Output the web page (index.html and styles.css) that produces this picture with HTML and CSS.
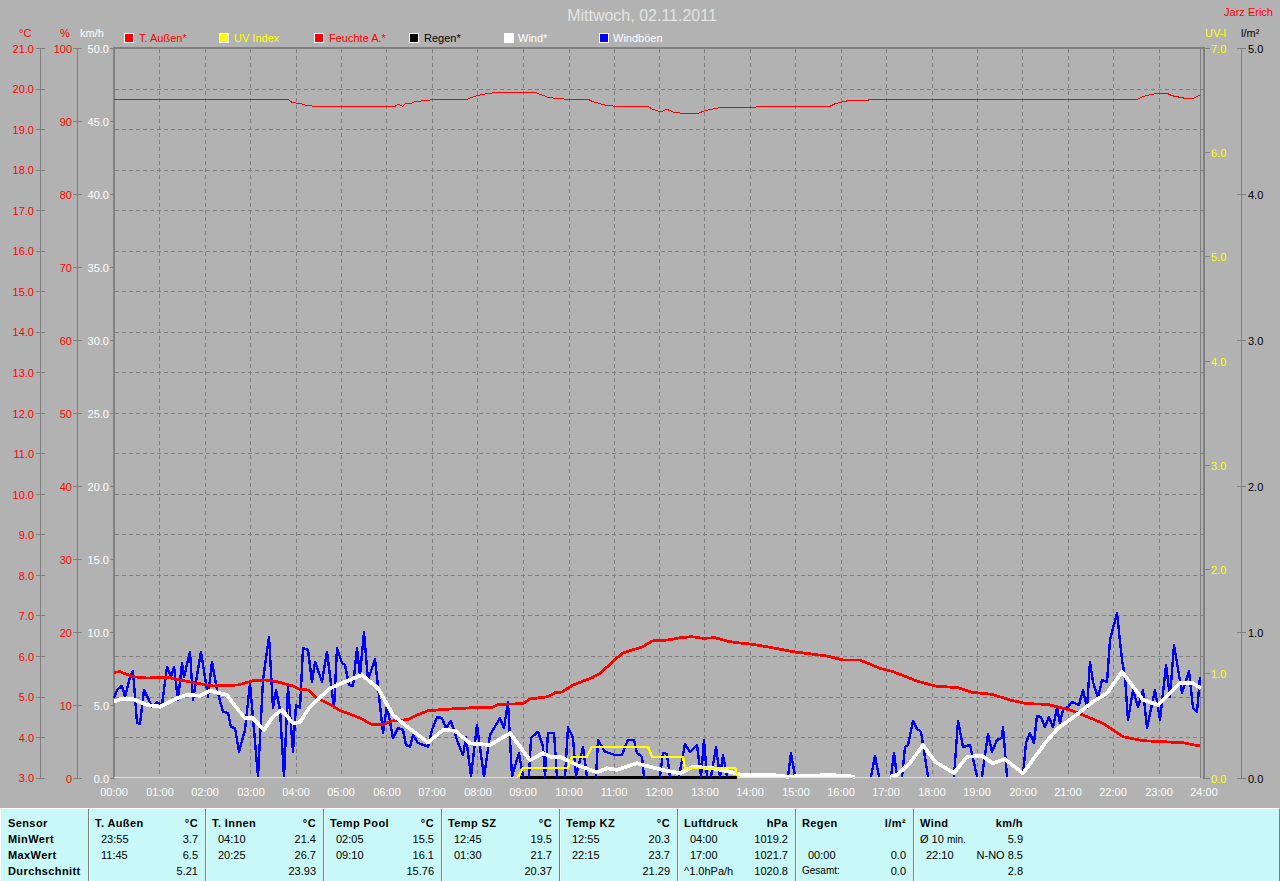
FILE: index.html
```html
<!DOCTYPE html>
<html lang="de">
<head>
    <meta charset="UTF-8">
    <title>Wetter Mittwoch, 02.11.2011</title>
    <link rel="stylesheet" href="styles.css">
</head>
<body>
    <svg class="chart" width="1280" height="808" viewBox="0 0 1280 808">
        <text class="title" x="642" y="21">Mittwoch, 02.11.2011</text>
        <text class="red end" x="1273" y="16">Jarz Erich</text>

        <!-- legende -->
        <g class="legend">
            <rect x="124.5" y="33.5" width="9" height="9" fill="#f00"/>
            <rect x="219.5" y="33.5" width="9" height="9" fill="#ff0"/>
            <rect x="314.5" y="33.5" width="9" height="9" fill="#f00"/>
            <rect x="409.5" y="33.5" width="9" height="9" fill="#000"/>
            <rect x="504.5" y="33.5" width="9" height="9" fill="#fff"/>
            <rect x="599.5" y="33.5" width="9" height="9" fill="#00f"/>
        </g>
        <text class="red" x="139" y="42">T. Außen*</text>
        <text class="yellow" x="234" y="42">UV Index</text>
        <text class="red" x="329" y="42">Feuchte A.*</text>
        <text class="black" x="424" y="42">Regen*</text>
        <text class="white" x="518" y="42">Wind*</text>
        <text class="white" x="613" y="42">Windböen</text>

        <text class="red" x="19" y="37">°C</text>
        <text class="red" x="60" y="37">%</text>
        <text class="white" x="80" y="37">km/h</text>
        <text class="yellow" x="1205" y="37">UV-I</text>
        <text class="black" x="1241" y="37">l/m²</text>

        <!-- raster -->
        <path class="grid" d="M115 89H1203M115 129.5H1203M115 170H1203M115 210.5H1203M115 251H1203M115 291.5H1203M115 332H1203M115 372.5H1203M115 413H1203M115 453.5H1203M115 494H1203M115 534.5H1203M115 575H1203M115 615.5H1203M115 656.5H1203M115 697H1203M115 737.5H1203"/>
        <path class="grid" d="M159.5 49V778M205.5 49V778M250.5 49V778M296.5 49V778M341.5 49V778M386.5 49V778M432.5 49V778M477.5 49V778M523.5 49V778M569.5 49V778M614.5 49V778M659.5 49V778M704.5 49V778M750.5 49V778M795.5 49V778M841.5 49V778M886.5 49V778M932.5 49V778M977.5 49V778M1022.5 49V778M1068.5 49V778M1113.5 49V778M1159.5 49V778"/>

        <!-- achsen -->
        <path class="axis" d="M40.5 48V778M36 48.5H45M36 89H45M36 129.5H45M36 170H45M36 210.5H45M36 251H45M36 291.5H45M36 332H45M36 372.5H45M36 413H45M36 453.5H45M36 494H45M36 534.5H45M36 575H45M36 615.5H45M36 656.5H45M36 697H45M36 737.5H45M36 778.5H45"/>
        <path class="axis" d="M77.5 48V778M73 48.5H82M73 121.5H82M73 194.5H82M73 267.5H82M73 340.5H82M73 413.5H82M73 486.5H82M73 559.5H82M73 632.5H82M73 705.5H82M73 778.5H82"/>
        <path class="axis" d="M110 48.5H114M110 121.5H114M110 194.5H114M110 267.5H114M110 340.5H114M110 413.5H114M110 486.5H114M110 559.5H114M110 632.5H114M110 705.5H114M110 778.5H114"/>
        <path class="axis" d="M1200.5 48V778M1204 48.5H1210M1204 152.5H1210M1204 256.5H1210M1204 361.5H1210M1204 465.5H1210M1204 569.5H1210M1204 673.5H1210M1204 778.5H1210"/>
        <path class="axis" d="M1241.5 48V778M1237 48.5H1246M1237 194.5H1246M1237 340.5H1246M1237 486.5H1246M1237 632.5H1246M1237 778.5H1246"/>
        <path class="frame" d="M114 779V48H1204V779"/>

        <g class="red end">
            <text x="34" y="53">21.0</text>
            <text x="34" y="93">20.0</text>
            <text x="34" y="134">19.0</text>
            <text x="34" y="174">18.0</text>
            <text x="34" y="215">17.0</text>
            <text x="34" y="255">16.0</text>
            <text x="34" y="296">15.0</text>
            <text x="34" y="336">14.0</text>
            <text x="34" y="377">13.0</text>
            <text x="34" y="418">12.0</text>
            <text x="34" y="458">11.0</text>
            <text x="34" y="499">10.0</text>
            <text x="34" y="539">9.0</text>
            <text x="34" y="580">8.0</text>
            <text x="34" y="620">7.0</text>
            <text x="34" y="661">6.0</text>
            <text x="34" y="701">5.0</text>
            <text x="34" y="742">4.0</text>
            <text x="34" y="782">3.0</text>
        </g>
        <g class="red end">
            <text x="72" y="53">100</text>
            <text x="72" y="126">90</text>
            <text x="72" y="199">80</text>
            <text x="72" y="272">70</text>
            <text x="72" y="345">60</text>
            <text x="72" y="418">50</text>
            <text x="72" y="491">40</text>
            <text x="72" y="564">30</text>
            <text x="72" y="637">20</text>
            <text x="72" y="710">10</text>
            <text x="72" y="783">0</text>
        </g>
        <g class="white end">
            <text x="109" y="53">50.0</text>
            <text x="109" y="126">45.0</text>
            <text x="109" y="199">40.0</text>
            <text x="109" y="272">35.0</text>
            <text x="109" y="345">30.0</text>
            <text x="109" y="418">25.0</text>
            <text x="109" y="491">20.0</text>
            <text x="109" y="564">15.0</text>
            <text x="109" y="637">10.0</text>
            <text x="109" y="710">5.0</text>
            <text x="109" y="783">0.0</text>
        </g>
        <g class="yellow">
            <text x="1211" y="53">7.0</text>
            <text x="1211" y="157">6.0</text>
            <text x="1211" y="261">5.0</text>
            <text x="1211" y="366">4.0</text>
            <text x="1211" y="470">3.0</text>
            <text x="1211" y="574">2.0</text>
            <text x="1211" y="678">1.0</text>
            <text x="1211" y="783">0.0</text>
        </g>
        <g class="black">
            <text x="1248" y="53">5.0</text>
            <text x="1248" y="199">4.0</text>
            <text x="1248" y="345">3.0</text>
            <text x="1248" y="491">2.0</text>
            <text x="1248" y="637">1.0</text>
            <text x="1248" y="783">0.0</text>
        </g>
        <g class="white middle">
            <text x="114" y="796">00:00</text>
            <text x="160" y="796">01:00</text>
            <text x="205" y="796">02:00</text>
            <text x="251" y="796">03:00</text>
            <text x="296" y="796">04:00</text>
            <text x="341" y="796">05:00</text>
            <text x="387" y="796">06:00</text>
            <text x="432" y="796">07:00</text>
            <text x="478" y="796">08:00</text>
            <text x="523" y="796">09:00</text>
            <text x="569" y="796">10:00</text>
            <text x="614" y="796">11:00</text>
            <text x="659" y="796">12:00</text>
            <text x="705" y="796">13:00</text>
            <text x="750" y="796">14:00</text>
            <text x="796" y="796">15:00</text>
            <text x="841" y="796">16:00</text>
            <text x="886" y="796">17:00</text>
            <text x="932" y="796">18:00</text>
            <text x="977" y="796">19:00</text>
            <text x="1023" y="796">20:00</text>
            <text x="1068" y="796">21:00</text>
            <text x="1113" y="796">22:00</text>
            <text x="1159" y="796">23:00</text>
            <text x="1204" y="796">24:00</text>
        </g>

        <!-- kurven -->
        <polyline class="line regen" points="520,777.5 737,777.5"/>
        <polyline class="line thin feuchte" points="114,99.3 288,99.3 292,102.3 302,104 307,105.7 317,106.3 395,106.3 398,104.3 403,106.3 405,103.7 412,103 415,101.7 423,100.7 438,99.3 467,99.3 472,97.3 478,95.3 487,93.7 498,92.3 535,92.3 542,95 548,97.3 557,98.7 570,99.3 588,99.3 593,101.7 605,105 615,106.3 648,106.3 652,109 658,111 663,111 667,109.3 673,112 682,113.3 698,113.3 705,110.7 713,109 722,107.3 756,107.3 757,106.3 830,106.3 835,103.7 843,101.7 850,100.3 868,100.3 870,99.3 1137,99.3 1142,97 1150,94.7 1158,93.3 1167,93.3 1172,95.7 1180,97.3 1185,98.3 1193,98.3 1200,95.3"/>
        <g class="gust">
            <polyline class="line" points="114,698 117,690 122,685.7 125,696.7 130,676.7 133,670.7 137,723 140,724 144,690 148,698 152,707 157,702 162,705 167,666.7 171,676.7 174,667 178,700 182,663 184,677 190,651.7 193,700 201,651.7 208,696.7 212,661.7 217,690 223,711.7 228,713 231,727 235,728 239,751.7 245,730 250,683.3 258,776.7 263,680 269,636.7 273,708 276,690 280,710 284,776.7 288,686.7 293,751.7 296,705 300,708 303,648 308,650 312,681.7 315,661.7 322,681.7 327,651.7 334,708 337,648 342,663 345,665 349,685 353,686 357,648 360,675 364,631.7 368,680 375,659 383,733 387,705 393,738 398,728 403,730 406,745 410,746.7 413,735 418,743 428,746.7 432,730 437,717 442,718 446,728 451,721 457,740 463,755 466,737 471,776.7 477,725 484,776.7 490,735 500,718 504,728 508,701.7 512,776.7 519,752.7 523,776.7"/>
            <polyline class="line" points="529,776.7 531,738 538,731.7 543,746.7 545,776.7 548,732.7 554,732.7 557,776.7"/>
            <polyline class="line" points="565,776.7 568,727.3 573,738 576,776.7 583,747.3 587,776.7"/>
            <polyline class="line" points="596,776.7 598,740 605,751.7 615,755 622,755 628,740 634,740 637,753 642,756.7 644,776.7"/>
            <polyline class="line" points="660,776.7 663,752.7 667,754 670,776.7"/>
            <polyline class="line" points="679,776.7 685,744 690,751.7 697,745 701,776.7 704,740 707,776.7"/>
            <polyline class="line" points="711,776.7 716,747.3 720,776.7 723,755 727,776.7"/>
            <polyline class="line" points="788,776.7 791,752.7 795,776.7"/>
            <polyline class="line" points="871,776.7 875,756 879,776.7"/>
            <polyline class="line" points="891,776.7 894,752.7 897,776.7"/>
            <polyline class="line" points="902,776.7 905,747 908,745 913,720.7 917,729 921,731.7 928,776.7"/>
            <polyline class="line" points="954,776.7 958,720.7 963,747 970,745 977,776.7"/>
            <polyline class="line" points="982,776.7 988,734 992,751.7 997,740 1002,738 1003,727 1007,776.7"/>
            <polyline class="line" points="1023,775 1026,743 1030,733 1034,743 1037,716 1041,717 1045,727 1049,717 1053,727 1057,708 1060,723 1063,710 1068,707 1072,702 1079,705 1083,690 1087,708 1090,662 1093,682 1098,698 1102,680 1107,682 1110,640 1117,613 1122,660 1125,677 1128,720 1133,690 1138,707 1143,690 1147,728 1155,690 1160,720 1166,665 1170,697 1174,645 1182,693 1189,671 1193,708 1197,712 1200,677"/>
        </g>
        <polyline class="line temp" points="114,672.3 120,671.7 133,676.7 147,678 168,677.3 180,680 197,683.3 213,686 238,685 253,680.7 265,680 277,681.7 293,686 300,689.3 308,690 317,698 333,706 340,710.7 350,714 362,719 372,724.7 383,724.7 392,721 408,719.5 415,716 428,710.7 450,709 473,707.7 492,707.7 498,704.3 523,703.7 530,699 548,696.7 555,692.7 562,692 573,685 593,677.3 600,673.3 613,661.7 622,653.3 630,650.7 643,646.7 652,641 668,640 680,637.7 692,636.7 703,638.3 715,637.7 727,641 737,642.7 750,644 767,646.7 793,651.7 827,656 843,660 860,660 880,668.3 893,671.7 917,681 935,686 958,687.7 972,692.3 992,694.3 1010,700 1027,703.7 1047,704.3 1070,710 1083,715 1103,723.3 1123,736.7 1143,740.7 1183,742.7 1200,746"/>
        <polyline class="line wind" points="114,701.7 120,699.3 133,699 147,705 160,706.7 177,698.3 187,695 200,695.7 210,690.7 227,695 233,703.3 245,718.3 253,718.3 264,730 273,716.7 282,710 293,723.3 300,722 310,706.7 330,688.3 343,682.7 362,675 378,688.3 393,715 407,726.7 428,742.3 443,730 455,730.7 470,743.3 490,745 510,733.3 530,760 543,753.3 552,757.3 560,756.7 577,765 597,772.3 607,768.3 617,770 637,763.3 647,766 663,770 680,773.3 693,766.7 713,768.3 730,771.7 742,775 773,775 787,776.7 830,775 855,776.7"/>
        <polyline class="line wind" points="890,776.7 897,775 910,763 923,745 935,761.7 954,773 967,756.7 982,756 993,763.3 1005,759.3 1023,773.3 1045,743.3 1058,728.3 1072,718.3 1093,701.7 1107,693.3 1122,671.7 1143,700 1158,705 1180,683.3 1193,683.3 1201,688.3"/>
        <polyline class="line thin uv" points="114,777.5 518,777.5"/>
        <polyline class="line uv" points="518,777 523,767.7 568,767.7 572,756.7 587,756.7 592,746.7 648,746.7 652,756.7 683,756.7 685,767.7 735,767.7 738,777"/>
        <polyline class="line thin uv" points="738,777.5 1200,777.5"/>
    </svg>

    <div class="stats">
        <section class="stat labels">
            <div class="row">Sensor</div>
            <div class="row">MinWert</div>
            <div class="row">MaxWert</div>
            <div class="row">Durchschnitt</div>
        </section>
        <section class="stat">
            <div class="row head"><span>T. Außen</span><span>°C</span></div>
            <div class="row"><span class="time">23:55</span><span>3.7</span></div>
            <div class="row"><span class="time">11:45</span><span>6.5</span></div>
            <div class="row"><span></span><span>5.21</span></div>
        </section>
        <section class="stat">
            <div class="row head"><span>T. Innen</span><span>°C</span></div>
            <div class="row"><span class="time">04:10</span><span>21.4</span></div>
            <div class="row"><span class="time">20:25</span><span>26.7</span></div>
            <div class="row"><span></span><span>23.93</span></div>
        </section>
        <section class="stat">
            <div class="row head"><span>Temp Pool</span><span>°C</span></div>
            <div class="row"><span class="time">02:05</span><span>15.5</span></div>
            <div class="row"><span class="time">09:10</span><span>16.1</span></div>
            <div class="row"><span></span><span>15.76</span></div>
        </section>
        <section class="stat">
            <div class="row head"><span>Temp SZ</span><span>°C</span></div>
            <div class="row"><span class="time">12:45</span><span>19.5</span></div>
            <div class="row"><span class="time">01:30</span><span>21.7</span></div>
            <div class="row"><span></span><span>20.37</span></div>
        </section>
        <section class="stat">
            <div class="row head"><span>Temp KZ</span><span>°C</span></div>
            <div class="row"><span class="time">12:55</span><span>20.3</span></div>
            <div class="row"><span class="time">22:15</span><span>23.7</span></div>
            <div class="row"><span></span><span>21.29</span></div>
        </section>
        <section class="stat">
            <div class="row head"><span>Luftdruck</span><span>hPa</span></div>
            <div class="row"><span class="time">04:00</span><span>1019.2</span></div>
            <div class="row"><span class="time">17:00</span><span>1021.7</span></div>
            <div class="row"><span>^1.0hPa/h</span><span>1020.8</span></div>
        </section>
        <section class="stat">
            <div class="row head"><span>Regen</span><span>l/m²</span></div>
            <div class="row"></div>
            <div class="row"><span class="time">00:00</span><span>0.0</span></div>
            <div class="row"><span class="small">Gesamt:</span><span>0.0</span></div>
        </section>
        <section class="stat wind-stat">
            <div class="row head"><span>Wind</span><span>km/h</span></div>
            <div class="row"><span>Ø 10 <span class="small">min.</span></span><span>5.9</span></div>
            <div class="row"><span class="time">22:10</span><span>N-NO 8.5</span></div>
            <div class="row"><span></span><span>2.8</span></div>
        </section>
    </div>
</body>
</html>
```

FILE: styles.css
```css
* {
    margin: 0;
    padding: 0;
    box-sizing: border-box;
}

html,
body {
    height: 100%;
}

body {
    background: #b2b2b2;
    font-family: "Liberation Sans", Arial, sans-serif;
    font-size: 11px;
    color: #000;
    overflow: hidden;
}

.chart {
    display: block;
    font-size: 11px;
}

.title {
    font-size: 16px;
    fill: #e4e4e4;
    text-anchor: middle;
}

.red {
    fill: #f00;
}

.yellow {
    fill: #ff0;
}

.white {
    fill: #fff;
}

.black {
    fill: #000;
}

.end {
    text-anchor: end;
}

.middle {
    text-anchor: middle;
}

.legend rect {
    stroke: #fff;
    shape-rendering: crispEdges;
}

.grid {
    fill: none;
    stroke: #808080;
    stroke-dasharray: 4 3;
    shape-rendering: crispEdges;
}

.axis {
    fill: none;
    stroke: #808080;
    shape-rendering: crispEdges;
}

.frame {
    fill: none;
    stroke: #808080;
    stroke-width: 2;
    shape-rendering: crispEdges;
}

.line {
    fill: none;
    stroke-width: 2.4;
    stroke-linejoin: round;
    shape-rendering: crispEdges;
}

.line.thin {
    stroke-width: 1;
}

.regen {
    stroke: #000;
}

.feuchte,
.temp {
    stroke: #f00;
}

.line.temp {
    stroke-width: 2.8;
}

.gust {
    stroke: #00f;
}

.line.wind {
    stroke: #fff;
    stroke-width: 3.8;
}

.uv {
    stroke: #ff0;
}

.stats {
    display: grid;
    grid-template-columns: 88px 117px repeat(6, 118px) 1fr;
    height: 73px;
    background: #c8f8f8;
    border-top: 1px solid #fff;
    border-left: 1px solid #fff;
    border-right: 1px solid #808080;
}

.stat {
    padding: 6px 7px 0 5px;
    border-right: 1px solid #808080;
    border-left: 1px solid #e8ffff;
}

.stat.labels {
    padding-left: 7px;
    border-left: 0;
}

.stat.wind-stat {
    width: 109px;
    border-right: 0;
    padding-right: 0;
}

.row {
    display: flex;
    justify-content: space-between;
    height: 16px;
    line-height: 16px;
    white-space: nowrap;
}

.head,
.labels .row {
    font-weight: bold;
    letter-spacing: .4px;
}

.time {
    padding-left: 6px;
}

.small {
    font-size: 10px;
}
```
